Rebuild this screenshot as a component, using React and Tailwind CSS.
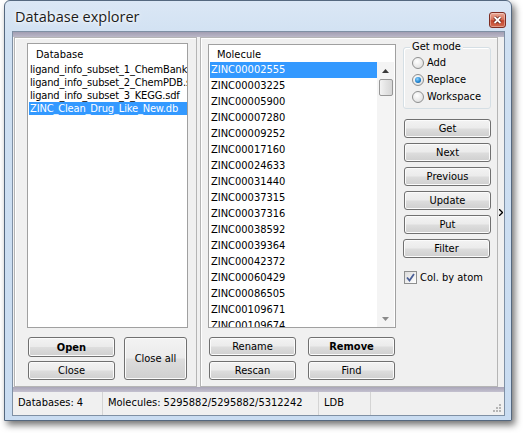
import React from 'react';

const databases = [
  'ligand_info_subset_1_ChemBank.sdf',
  'ligand_info_subset_2_ChemPDB.sdf',
  'ligand_info_subset_3_KEGG.sdf',
  'ZINC_Clean_Drug_Like_New.db',
];

const molecules = [
  'ZINC00002555', 'ZINC00003225', 'ZINC00005900', 'ZINC00007280', 'ZINC00009252',
  'ZINC00017160', 'ZINC00024633', 'ZINC00031440', 'ZINC00037315', 'ZINC00037316',
  'ZINC00038592', 'ZINC00039364', 'ZINC00042372', 'ZINC00060429', 'ZINC00086505',
  'ZINC00109671', 'ZINC00109674',
];

function Btn({ children, bold, className }) {
  return (
    <div
      className={`flex items-center justify-center rounded-[3px] border border-[#707070] bg-[linear-gradient(#f3f3f3_0%,#ebebeb_48%,#dddddd_52%,#cfcfcf_100%)] shadow-[inset_0_0_0_1px_#fbfbfb] text-[11px] leading-none text-black ${bold ? 'font-bold' : ''} ${className}`}
    >
      {children}
    </div>
  );
}

function Radio({ label, checked }) {
  return (
    <div className="flex h-[17px] items-center">
      <div className="flex h-[12px] w-[12px] items-center justify-center rounded-full border border-[#8e8f8f] bg-[radial-gradient(circle_at_40%_35%,#ffffff,#e4e4e4_70%,#cfcfcf)]">
        {checked && (
          <div className="h-[6px] w-[6px] rounded-full bg-[radial-gradient(circle_at_40%_35%,#8cd3ff,#1b7fcc_60%,#0b4a88)]" />
        )}
      </div>
      <span className="ml-[3px] text-[11px] leading-none text-black">{label}</span>
    </div>
  );
}

export default function App() {
  return (
    <div className="h-[433px] w-[523px] overflow-hidden bg-white font-['DejaVu_Sans_Condensed','Liberation_Sans',sans-serif]">
      {/* window */}
      <div className="ml-[4px] flex h-[421px] w-[508px] flex-col rounded-t-[6px] border border-[#55687f] bg-[linear-gradient(#dbe7f5,#cfe0f2_10%,#c9dcf1)] pb-[4px] pl-[7px] pr-[6px] shadow-[3px_4px_7px_rgba(0,0,0,0.55)]">
        {/* title bar */}
        <div className="relative h-[30px] shrink-0">
          <div className="absolute left-[3px] top-[7px] font-['Open_Sans',sans-serif] text-[14.5px] leading-[18px] text-[#1b1b1b] [text-shadow:0_0_6px_#fff,0_0_3px_#fff]">
            Database explorer
          </div>
          <div className="absolute right-[-1px] top-[11px] flex h-[16px] w-[17px] items-center justify-center rounded-[3px] border border-[#7e2d22] bg-[linear-gradient(#eaa996_0%,#d9765e_45%,#c3452d_55%,#d46a4e_100%)] shadow-[inset_0_0_0_1px_rgba(255,255,255,0.35)]">
            <svg width="9" height="8" viewBox="0 0 9 8">
              <path d="M1.5 1 L7.5 7 M7.5 1 L1.5 7" stroke="#5a1a10" strokeWidth="3.2" />
              <path d="M1.5 1 L7.5 7 M7.5 1 L1.5 7" stroke="#ffffff" strokeWidth="1.8" />
            </svg>
          </div>
        </div>

        {/* client */}
        <div className="flex h-[385px] w-[493px] flex-col border border-[#7f90a4] bg-[#f0f0f0]">
          <div className="h-[5px] shrink-0 bg-[linear-gradient(#a29eb2,#bbb8c8)]" />

          {/* main area */}
          <div className="flex h-[350px] shrink-0">
            {/* left panel */}
            <div className="ml-[1px] flex h-full w-[183px] flex-col border border-[#b5b5b5] pl-[12px] pt-[5px] shadow-[inset_1px_1px_0_#ffffff]">
              <div className="h-[285px] w-[161px] overflow-hidden border border-[#a0a0a0] bg-white">
                <div className="flex h-[19px] items-center pl-[8px] pt-[3px] text-[11px] text-black">Database</div>
                {databases.map((d, i) => (
                  <div
                    key={d}
                    className={`ml-[1px] h-[13px] whitespace-nowrap pl-[1px] text-[11px] leading-[13px] tracking-[-0.15px] ${i === 3 ? 'bg-[#3399ff] text-white' : 'text-black'}`}
                  >
                    {d}
                  </div>
                ))}
              </div>
              <div className="mt-[9px] flex gap-[9px]">
                <div className="ml-[1px] flex w-[87px] flex-col gap-[4px]">
                  <Btn bold className="h-[20px]">Open</Btn>
                  <Btn className="h-[19px]">Close</Btn>
                </div>
                <Btn className="h-[43px] w-[63px]">Close all</Btn>
              </div>
            </div>

            {/* second panel */}
            <div className="ml-[3px] flex h-full w-[298px] border border-[#b5b5b5] pl-[7px] pt-[6px] shadow-[inset_1px_1px_0_#ffffff]">
              <div className="flex w-[188px] flex-col">
                <div className="flex h-[284px] flex-col overflow-hidden border border-[#a0a0a0] bg-white">
                  <div className="flex h-[17px] shrink-0 items-center pl-[8px] pt-[3px] text-[11px] text-black">Molecule</div>
                  <div className="flex min-h-0 flex-1">
                    <div className="w-[168px] overflow-hidden pl-[1px]">
                      {molecules.map((m, i) => (
                        <div
                          key={m}
                          className={`h-[16px] pl-[1px] text-[11px] leading-[16px] ${i === 0 ? 'bg-[#3399ff] text-white' : 'text-black'}`}
                        >
                          {m}
                        </div>
                      ))}
                    </div>
                    {/* scrollbar */}
                    <div className="flex w-[17px] flex-col items-center bg-[#f4f4f4]">
                      <div className="flex h-[17px] w-full items-center justify-center">
                        <svg width="7" height="4" viewBox="0 0 7 4"><path d="M0 4 L3.5 0 L7 4 Z" fill="#3a3a3a" /></svg>
                      </div>
                      <div className="h-[17px] w-[14px] rounded-[2px] border border-[#979797] bg-[linear-gradient(90deg,#f3f3f3,#e3e3e3_50%,#d6d6d6)]" />
                      <div className="flex-1" />
                      <div className="flex h-[17px] w-full items-center justify-center">
                        <svg width="7" height="4" viewBox="0 0 7 4"><path d="M0 0 L7 0 L3.5 4 Z" fill="#8a8a8a" /></svg>
                      </div>
                    </div>
                  </div>
                </div>
                <div className="mt-[9px] flex gap-[12px] pl-[1px]">
                  <div className="flex w-[87px] flex-col gap-[5px]">
                    <Btn className="h-[19px]">Rename</Btn>
                    <Btn className="h-[19px]">Rescan</Btn>
                  </div>
                  <div className="flex w-[87px] flex-col gap-[5px]">
                    <Btn bold className="h-[19px]">Remove</Btn>
                    <Btn className="h-[19px]">Find</Btn>
                  </div>
                </div>
              </div>

              {/* right column */}
              <div className="ml-[7px] flex w-[88px] flex-col">
                <div className="relative mt-[3px] h-[62px] rounded-[3px] border border-[#d5dfe5] pl-[8px] pt-[6px] shadow-[inset_1px_1px_0_#ffffff]">
                  <div className="absolute left-[6px] top-[-8px] bg-[#f0f0f0] px-[2px] text-[11px] leading-[14px] text-black">Get mode</div>
                  <Radio label="Add" />
                  <Radio label="Replace" checked />
                  <Radio label="Workspace" />
                </div>
                <div className="mt-[10px] ml-[1px] flex w-[87px] flex-col gap-[5px]">
                  <Btn className="h-[19px]">Get</Btn>
                  <Btn className="h-[19px]">Next</Btn>
                  <Btn className="h-[19px]">Previous</Btn>
                  <Btn className="h-[19px]">Update</Btn>
                  <Btn className="h-[19px]">Put</Btn>
                </div>
                <Btn className="mt-[5px] h-[19px] w-[87px]">Filter</Btn>
                <div className="mt-[13px] ml-[1px] flex items-center">
                  <div className="flex h-[13px] w-[13px] items-center justify-center border border-[#8e8f8f] bg-[linear-gradient(135deg,#dcdcdc,#ffffff)]">
                    <svg width="9" height="9" viewBox="0 0 9 9">
                      <path d="M1 4.5 L3.5 7.5 L8 1" fill="none" stroke="#4a5f97" strokeWidth="1.8" />
                    </svg>
                  </div>
                  <span className="ml-[3px] text-[11px] leading-none text-black">Col. by atom</span>
                </div>
              </div>
            </div>

            {/* collapse strip */}
            <div className="flex w-[6px] items-center justify-center">
              <svg width="4" height="7" viewBox="0 0 4 7"><path d="M0 0 L3.5 3.5 L0 7" fill="none" stroke="#000" strokeWidth="1.3" /></svg>
            </div>
          </div>

          <div className="h-[5px] shrink-0 bg-[linear-gradient(#a9a5b8,#c4c1cf)]" />

          {/* status bar */}
          <div className="relative flex h-[23px] items-center text-[11px] text-black">
            <div className="flex h-full w-[90px] items-center border-r border-[#d4d4d4] pl-[5px]">Databases: 4</div>
            <div className="flex h-full w-[216px] items-center border-r border-[#d4d4d4] pl-[5px]">Molecules: 5295882/5295882/5312242</div>
            <div className="flex h-full w-[52px] items-center border-r border-[#d4d4d4] pl-[5px]">LDB</div>
            <svg className="absolute bottom-[2px] right-[2px]" width="10" height="10" viewBox="0 0 10 10">
              <g fill="#b5b5b5">
                <rect x="7" y="1" width="2" height="2" />
                <rect x="4" y="4" width="2" height="2" />
                <rect x="7" y="4" width="2" height="2" />
                <rect x="1" y="7" width="2" height="2" />
                <rect x="4" y="7" width="2" height="2" />
                <rect x="7" y="7" width="2" height="2" />
              </g>
            </svg>
          </div>
        </div>
      </div>
    </div>
  );
}
